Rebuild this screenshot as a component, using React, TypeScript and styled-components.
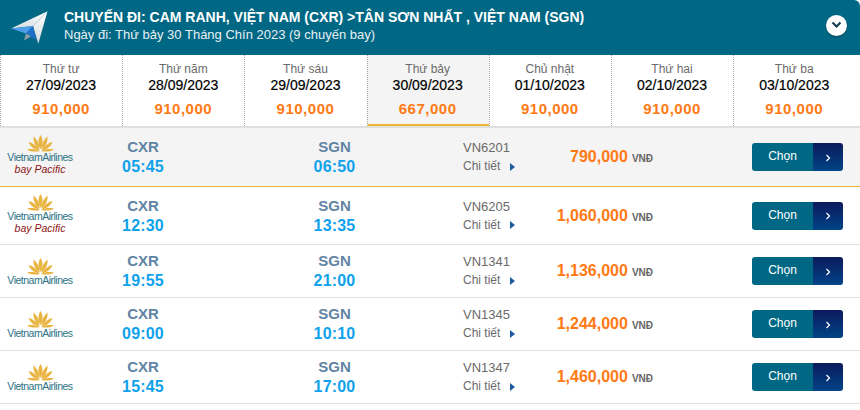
import React from 'react';
import styled, { createGlobalStyle } from 'styled-components';

const GlobalStyle = createGlobalStyle`
  html, body { margin: 0; padding: 0; background: #fff; }
  body { font-family: "Liberation Sans", Arial, sans-serif; }
  * { box-sizing: border-box; }
`;

const Page = styled.div`
  width: 860px;
  height: 410px;
  overflow: hidden;
  background: #fff;
`;

const Header = styled.header`
  height: 55px;
  background: #006885;
  border-top-right-radius: 6px;
  color: #fff;
  display: flex;
  align-items: center;
  padding: 0 13px 0 10px;
`;

const HeaderText = styled.div`
  flex: 1;
  margin-left: 14px;
  padding-bottom: 3px;
`;

const Title = styled.div`
  font-size: 14px;
  font-weight: bold;
  line-height: 18px;
`;

const SubTitle = styled.div`
  font-size: 13px;
  line-height: 18px;
  color: #e6f0f3;
`;

const Toggle = styled.button`
  width: 21px;
  height: 21px;
  padding: 0;
  border: 0;
  border-radius: 50%;
  background: #fff;
  box-shadow: 0 1px 2px rgba(0, 0, 0, 0.35);
  display: flex;
  align-items: center;
  justify-content: center;
  margin-bottom: 5px;
`;

const Tabs = styled.div`
  display: grid;
  grid-template-columns: repeat(7, 122.2px);
  height: 73px;
  border-bottom: 2px solid #dfdfdf;
`;

const Tab = styled.div<{ $active?: boolean }>`
  height: 71px;
  text-align: center;
  padding: 6px 1px 0 0;
  border-left: 1px dotted #aaa;
  background: ${p => (p.$active ? '#f4f4f4' : '#fff')};
  border-bottom: ${p => (p.$active ? '2px solid #f0b432' : '0')};
`;

const Day = styled.div`
  font-size: 12px;
  line-height: 16px;
  color: #6b6b6b;
`;

const TabDate = styled.div`
  font-size: 14px;
  line-height: 17px;
  color: #000;
  -webkit-text-stroke: 0.2px #000;
`;

const TabPrice = styled.div`
  font-size: 15px;
  font-weight: bold;
  line-height: 22px;
  margin-top: 4px;
  letter-spacing: 0.5px;
  color: #ff7a14;
`;

const Row = styled.div<{ $height: number; $active?: boolean }>`
  display: grid;
  grid-template-columns: 80px 126px 257px 86px 104px 1fr;
  align-items: center;
  height: ${p => p.$height}px;
  background: ${p => (p.$active ? '#f4f4f4' : '#fff')};
  border-bottom: 1px solid ${p => (p.$active ? '#f0b432' : '#dfdfdf')};
`;

const Logo = styled.div<{ $tall?: boolean }>`
  display: flex;
  flex-direction: column;
  align-items: center;
  margin-top: ${p => (p.$tall ? -3 : 2)}px;
`;

const Brand = styled.div`
  font-size: 10.5px;
  line-height: 11px;
  letter-spacing: -0.5px;
  color: #2c7284;
  white-space: nowrap;
`;

const BayPacific = styled.div`
  font-size: 10.5px;
  line-height: 13px;
  font-style: italic;
  color: #8c1414;
`;

const Stop = styled.div`
  text-align: center;
`;

const Code = styled.div`
  font-size: 15px;
  font-weight: bold;
  line-height: 19px;
  color: #5f84a4;
`;

const Time = styled.div`
  font-size: 16px;
  font-weight: bold;
  line-height: 21px;
  letter-spacing: 0.2px;
  color: #0fa2ec;
`;

const Flight = styled.div`
  font-size: 13px;
  line-height: 19px;
  color: #6a6a6a;
`;

const Detail = styled.div`
  display: flex;
  align-items: center;
  gap: 10px;
  font-size: 12px;
`;

const Arrow = styled.span`
  width: 0;
  height: 0;
  border-style: solid;
  border-width: 4.5px 0 4.5px 5px;
  border-color: transparent transparent transparent #1d5ba0;
`;

const PriceCell = styled.div`
  display: flex;
  justify-content: flex-end;
  align-items: baseline;
  gap: 4px;
`;

const Price = styled.span`
  font-size: 16px;
  font-weight: bold;
  color: #ff7a14;
`;

const Currency = styled.span`
  font-size: 10px;
  font-weight: bold;
  color: #666;
`;

const ButtonCell = styled.div`
  display: flex;
  justify-content: flex-end;
  padding-right: 17px;
`;

const ChooseButton = styled.button`
  display: flex;
  width: 91px;
  height: 28px;
  padding: 0;
  border: 0;
  border-radius: 3px;
  overflow: hidden;
  color: #fff;
  font-family: inherit;
`;

const ChooseLabel = styled.span`
  width: 61px;
  background: #006885;
  font-size: 12px;
  line-height: 26px;
`;

const ChooseArrow = styled.span`
  flex: 1;
  background: linear-gradient(#0c1a5c, #004487);
  display: flex;
  align-items: center;
  justify-content: center;
  padding-top: 1px;
`;

const PlaneIcon = () => (
  <svg width="40" height="36" viewBox="0 0 40 36">
    <defs>
      <linearGradient id="wing" x1="0" y1="0" x2="0" y2="1">
        <stop offset="0" stopColor="#ffffff" />
        <stop offset="1" stopColor="#d3dade" />
      </linearGradient>
      <linearGradient id="topwing" x1="1" y1="0" x2="0" y2="1">
        <stop offset="0" stopColor="#ffffff" />
        <stop offset="1" stopColor="#cfd9de" />
      </linearGradient>
    </defs>
    <polygon points="37.5,1.2 1,18.5 23,16" fill="url(#topwing)" />
    <polygon points="37.5,1.2 23,16 28.3,33.8" fill="url(#wing)" />
    <polygon points="1,18.5 23,16 16,23.5" fill="#4f9fe8" />
    <polygon points="23,16 16,23.5 26.5,30" fill="#1f6fc8" />
    <polygon points="16,23.5 14,30.5 21,26.5" fill="#8e9ca3" />
  </svg>
);

const Lotus = () => (
  <svg width="27" height="17" viewBox="0 0 27 17">
    <g fill="#e9b441">
      <path d="M13.5 0 C10.8 4 10.8 9 13.5 14 C16.2 9 16.2 4 13.5 0Z" />
      <path d="M6.5 1.5 C6 6 8 11 12.5 15 C12.5 9 10.5 5 6.5 1.5Z" />
      <path d="M20.5 1.5 C21 6 19 11 14.5 15 C14.5 9 16.5 5 20.5 1.5Z" />
      <path d="M1.5 7 C3 11 7 14.5 12 15.5 C10 11 6 8 1.5 7Z" />
      <path d="M25.5 7 C24 11 20 14.5 15 15.5 C17 11 21 8 25.5 7Z" />
      <path d="M0 14.5 C4 17 9 17 13 16 C9 14 4 13.5 0 14.5Z" />
      <path d="M27 14.5 C23 17 18 17 14 16 C18 14 23 13.5 27 14.5Z" />
    </g>
  </svg>
);

const days = [
  { day: 'Thứ tư', date: '27/09/2023', price: '910,000' },
  { day: 'Thứ năm', date: '28/09/2023', price: '910,000' },
  { day: 'Thứ sáu', date: '29/09/2023', price: '910,000' },
  { day: 'Thứ bảy', date: '30/09/2023', price: '667,000', active: true },
  { day: 'Chủ nhật', date: '01/10/2023', price: '910,000' },
  { day: 'Thứ hai', date: '02/10/2023', price: '910,000' },
  { day: 'Thứ ba', date: '03/10/2023', price: '910,000' },
];

const flights = [
  { dep: '05:45', arr: '06:50', no: 'VN6201', price: '790,000', pacific: true, active: true, height: 59 },
  { dep: '12:30', arr: '13:35', no: 'VN6205', price: '1,060,000', pacific: true, height: 58 },
  { dep: '19:55', arr: '21:00', no: 'VN1341', price: '1,136,000', height: 53 },
  { dep: '09:00', arr: '10:10', no: 'VN1345', price: '1,244,000', height: 53 },
  { dep: '15:45', arr: '17:00', no: 'VN1347', price: '1,460,000', height: 53 },
];

export default function App() {
  return (
    <Page>
      <GlobalStyle />
      <Header>
        <PlaneIcon />
        <HeaderText>
          <Title>CHUYẾN ĐI: CAM RANH, VIỆT NAM (CXR) &gt;TÂN SƠN NHẤT , VIỆT NAM (SGN)</Title>
          <SubTitle>Ngày đi: Thứ bảy 30 Tháng Chín 2023 (9 chuyến bay)</SubTitle>
        </HeaderText>
        <Toggle>
          <svg width="11" height="8" viewBox="0 0 11 8">
            <path d="M1.5 1.5 L5.5 5.5 L9.5 1.5" fill="none" stroke="#12384a" strokeWidth="2" />
          </svg>
        </Toggle>
      </Header>
      <Tabs>
        {days.map(d => (
          <Tab key={d.date} $active={d.active}>
            <Day>{d.day}</Day>
            <TabDate>{d.date}</TabDate>
            <TabPrice>{d.price}</TabPrice>
          </Tab>
        ))}
      </Tabs>
      {flights.map(f => (
        <Row key={f.no} $height={f.height} $active={f.active}>
          <Logo $tall={f.pacific}>
            <Lotus />
            <Brand>VietnamAirlines</Brand>
            {f.pacific && <BayPacific>bay Pacific</BayPacific>}
          </Logo>
          <Stop>
            <Code>CXR</Code>
            <Time>{f.dep}</Time>
          </Stop>
          <Stop>
            <Code>SGN</Code>
            <Time>{f.arr}</Time>
          </Stop>
          <Flight>
            <div>{f.no}</div>
            <Detail>
              Chi tiết <Arrow />
            </Detail>
          </Flight>
          <PriceCell>
            <Price>{f.price}</Price>
            <Currency>VNĐ</Currency>
          </PriceCell>
          <ButtonCell>
            <ChooseButton>
              <ChooseLabel>Chọn</ChooseLabel>
              <ChooseArrow>
                <svg width="6" height="8" viewBox="0 0 6 8">
                  <path d="M1.5 1 L4.5 4 L1.5 7" fill="none" stroke="#fff" strokeWidth="1.2" />
                </svg>
              </ChooseArrow>
            </ChooseButton>
          </ButtonCell>
        </Row>
      ))}
    </Page>
  );
}
